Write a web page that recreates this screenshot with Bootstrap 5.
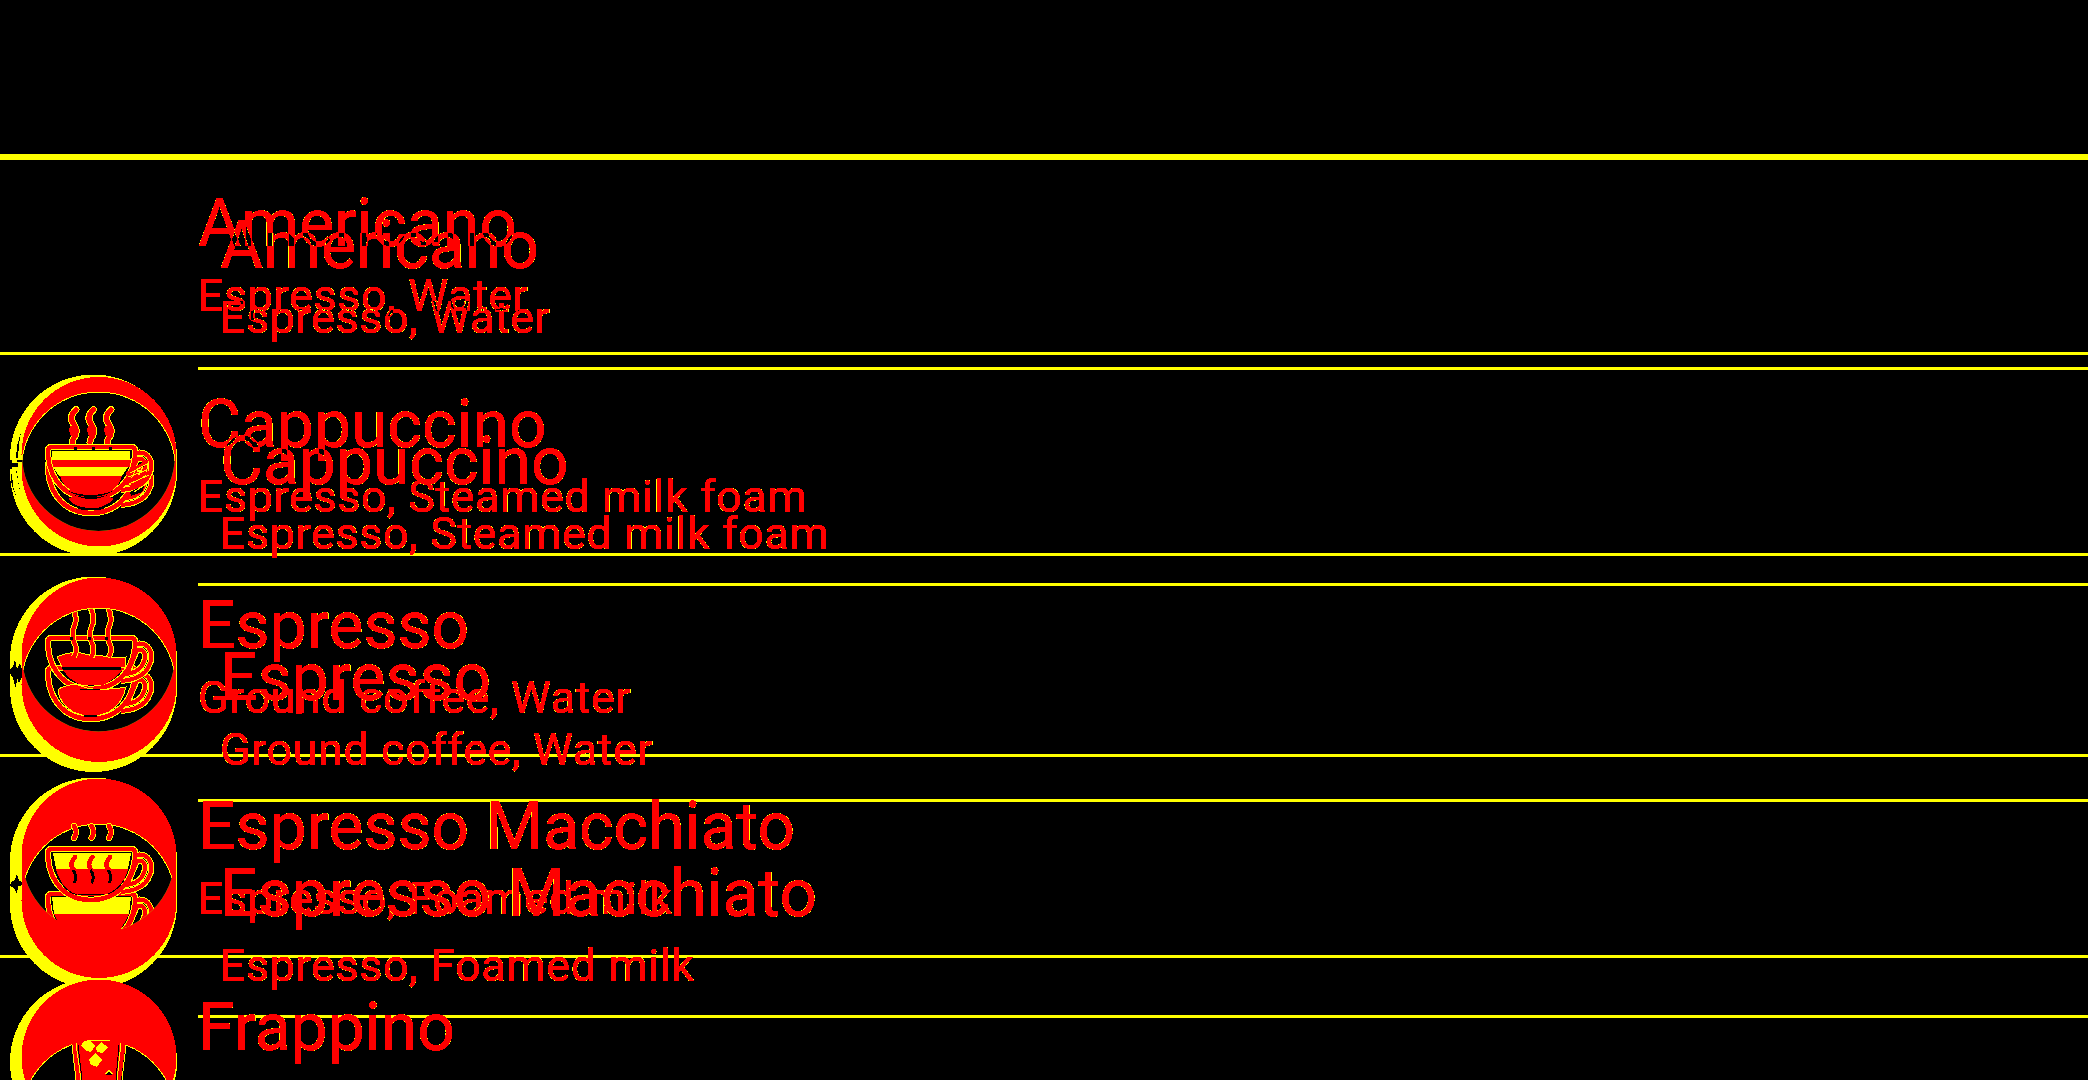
<!DOCTYPE html>
<html lang="en">
<head>
<meta charset="utf-8">
<meta name="viewport" content="width=device-width, initial-scale=1">
<title>Coffee list</title>
<link href="https://cdn.jsdelivr.net/npm/bootstrap@5.3.0/dist/css/bootstrap.min.css" rel="stylesheet">
<style>
  body { background: #000; font-family: Roboto, sans-serif; height: 1080px; }
  .appbar { height: 160px; border-bottom: 6px solid #ff0; }
  /* every child of a stack shares one cell, so the lists lie over each other */
  .stack { display: grid; grid-template: 920px / 100%; overflow: hidden; }
  .stack > * { grid-area: 1 / 1; min-width: 0; min-height: 0; }
  .words { background: #000; isolation: isolate; filter: url(#edges); }
  .words > :last-child { mix-blend-mode: difference; }
  .wide > li { height: 201px; flex: none; }
  .tall > li { height: 216px; flex: none; }
  .ruled.wide > li:first-child { height: 195px; }
  .ruled.tall > li:first-child { height: 210px; }
  .ruled > li { border-bottom: 3px solid #ff0; }
  .wide.names, .wide.parts { padding-left: 198px; }
  .tall.names, .tall.parts { padding-left: 220px; }
  .names, .parts { color: #f00; white-space: nowrap; }
  .names { font-size: 66px; line-height: 78px; }
  .parts { font-size: 45px; line-height: 54px; letter-spacing: .53px; }
  .wide.names { padding-top: 25px; }
  .tall.names { padding-top: 47px; }
  .wide.parts { padding-top: 109px; }
  .tall.parts { padding-top: 131px; }
  .inset { margin-left: 198px; }
  .art { shape-rendering: crispEdges; }
</style>
<script src="https://cdn.jsdelivr.net/npm/bootstrap@5.3.0/dist/js/bootstrap.bundle.min.js"></script>
</head>
<body class="overflow-hidden">
<svg width="0" height="0" class="position-absolute" aria-hidden="true">
  <filter id="edges" x="0" y="0" width="100%" height="100%" color-interpolation-filters="sRGB">
    <feColorMatrix in="SourceGraphic" values="0 0 0 0 1  0 0 0 0 1  0 0 0 0 0  1 0 0 0 0"/>
    <feComponentTransfer result="rim"><feFuncA type="discrete" tableValues="0 1 1 1 1 1 1 1 1 1 1 1 1 1 1 1 1 1 1 1 1 1 1 1 1"/></feComponentTransfer>
    <feColorMatrix in="SourceGraphic" values="0 0 0 0 1  0 0 0 0 0  0 0 0 0 0  1 0 0 0 0"/>
    <feComponentTransfer result="core"><feFuncA type="discrete" tableValues="0 0 0 0 1 1 1 1 1 1 1 1 1 1 1 1 1 1 1 1 1 1 1 1 1"/></feComponentTransfer>
    <feMerge><feMergeNode in="rim"/><feMergeNode in="core"/></feMerge>
  </filter>
</svg>
<header class="appbar"></header>
<main class="stack">
  <ul class="list-unstyled mb-0 d-flex flex-column wide ruled"><li></li><li></li><li></li><li></li></ul>
  <ul class="list-unstyled mb-0 d-flex flex-column tall ruled inset"><li></li><li></li><li></li><li></li></ul>
  <svg class="art" width="198" height="920" viewBox="0 160 198 920" fill="none">
    <defs>
      <path id="cup" d="M48 10V6Q48 2 52 2H131Q135 2 135 6V12C132 36 116 53 91 53C66 53 50 36 48 10Z"/>
      <path id="ear" d="M135 8C149 5 156 18 148 32C142 42 131 44 121 45M137 14C145 12 148 21 141 31C137 36 132 37 127 38Z"/>
      <g id="mug"><use href="#cup" stroke="#ff0" stroke-width="6.5"/><use href="#ear" stroke="#ff0" stroke-width="6"/><use href="#ear" stroke="#f00" stroke-width="4"/><use href="#cup" stroke="#f00" stroke-width="4.5"/></g>
      <path id="wisp" d="M76 0Q68 8 74 15Q79 22 73 30Q71 36 76 44" stroke-linecap="round"/>
      <g id="steam"><g stroke="#ff0" stroke-width="7"><use href="#wisp"/><use href="#wisp" x="17.500"/><use href="#wisp" x="35"/></g><g stroke="#f00" stroke-width="5"><use href="#wisp"/><use href="#wisp" x="17.500"/><use href="#wisp" x="35"/></g></g>
      <clipPath id="l1"><circle cx="98.500" cy="454.500" r="76.500"/></clipPath>
      <clipPath id="l2"><circle cx="98.500" cy="655" r="76.500"/></clipPath>
      <clipPath id="l3"><circle cx="98.500" cy="856" r="76.500"/></clipPath>
      <clipPath id="l4"><circle cx="98.500" cy="1057" r="76.500"/></clipPath>
      <clipPath id="e2"><circle cx="98.500" cy="685" r="76.500"/></clipPath>
    </defs>
    <!-- discs -->
    <g fill="#ff0">
      <circle cx="93.500" cy="458" r="83.500"/><circle cx="93.500" cy="472.500" r="83.500"/>
      <circle cx="93.500" cy="660" r="83.500"/><circle cx="93.500" cy="688.500" r="83.500"/><path d="M10 660h167v29H10z"/>
      <circle cx="93.500" cy="861" r="83.500"/><circle cx="93.500" cy="904.500" r="83.500"/><path d="M10 861h167v44H10z"/>
      <circle cx="93.500" cy="1062" r="83.500"/>
    </g>
    <path fill="#000" d="M10 460h2v9h-2zM17 460h5v2h-5zM10 463h8v4h-8zM21 432l-4 14-1 12h2l1-14zM11 474h1l1 12 4 12-4-9-2-8zM17 470l1 12 4 18-3-15-3-14zM15 659l2 10 3-6 2 6v8l-3 6-2-5-1 11-3-11-3-5v-4l3-2zM11 882l4-2 2-6 2 7 4 1v3l-5 1-1 8-3-6-4-2z"/>
    <g fill="#f00">
      <circle cx="99" cy="454.500" r="77.500"/><circle cx="99" cy="469" r="77.500"/>
      <circle cx="99" cy="655" r="77.500"/><circle cx="99" cy="684.500" r="77.500"/><path d="M22 655h154v30H22z"/>
      <circle cx="99" cy="856" r="77.500"/><circle cx="99" cy="900.500" r="77.500"/><path d="M22 856h154v45H22z"/>
      <circle cx="99" cy="1057" r="77.500"/>
    </g>
    <g fill="#ff0">
      <g clip-path="url(#l1)"><circle cx="98.500" cy="469" r="77.500"/></g>
      <g clip-path="url(#l2)"><circle cx="98.500" cy="685" r="77.500"/></g>
      <g clip-path="url(#l3)"><circle cx="98.500" cy="901" r="77.500"/></g>
      <g clip-path="url(#l4)"><circle cx="98.500" cy="1117" r="77.500"/></g>
    </g>
    <g fill="#000">
      <g clip-path="url(#l1)"><circle cx="98.500" cy="469" r="76.500"/></g>
      <g clip-path="url(#l2)"><circle cx="98.500" cy="685" r="76.500"/></g>
      <g clip-path="url(#l3)"><circle cx="98.500" cy="901" r="76.500"/></g>
      <g clip-path="url(#l4)"><circle cx="98.500" cy="1117" r="76.500"/></g>
    </g>
    <!-- cappuccino -->
    <use href="#steam" y="409.500"/>
    <use href="#mug" y="460"/>
    <path fill="#000" d="M51 449h80v10H51zM57 465h68v4H57z"/>
    <path fill="#ff0" d="M52 451h78v9H52zM53 467h75l-6 9H59z"/>
    <path fill="#f00" d="M50 460h82l-1 7H52zM60 476h62q-5 16-15 17H74q-10-5-14-17z"/>
    <use href="#mug" y="445"/>
    <path fill="#f00" d="M62 476h58q-3 13-14 19l8 4q-11 10-23 9-15 0-23-9l8-4q-10-6-14-19z"/>
    <path fill="#000" d="M68 491q23 8 45 0-22 12-45 0zM74 495q17 5 34 0-17 8-34 0zM78 508q13 3 26 0v1q-13 3-26 0z"/>
    <path fill="#000" d="M74 447h3v3h-3zM92 447h3v3h-3zM109 447h3v3h-3zM130 492l15-7-3 7-11 4zM141 462h3v5h-3z"/>
    <path stroke="#f00" stroke-width="3" d="M130 480l20-8M130 487l18-11M126 474l22-13"/>
    <path stroke="#ff0" stroke-width="1" d="M128 477l19-7M129 484l20-9M130 473l17-9M134 492l12-8"/>
    <path fill="#f00" d="M70 426l5-1 3 6-2 6-5-1-2-5zM88 426l5-1 3 6-2 6-5-1-2-5zM105 426l5-1 3 6-2 6-5-1-2-5z"/>
    <!-- espresso -->
    <use href="#mug" y="666"/>
    <use href="#mug" y="636"/>
    <path fill="#f00" stroke="#ff0" d="M57 657q8-4 20-5 14 4 26 4 12 3 23 1l-1 10H62zM58 690q3-4 18-6 14 7 33 5 7 0 17-2-3 16-17 25-18 8-36 0-14-9-15-22z"/>
    <path fill="#f00" d="M63 670h59q-9 11-19 15H82q-12-4-19-15z"/>
    <path fill="#000" d="M62 667h59v3H63zM80 689h20v1H80zM84 715h13v2H84z"/>
    <g clip-path="url(#e2)"><g stroke="#ff0" stroke-width="6"><path id="w2" d="M73 607Q78 619 74 627Q71 634 74 642Q78 650 74 657"/><use href="#w2" x="17.500"/><use href="#w2" x="35"/></g><g stroke="#f00" stroke-width="4"><use href="#w2"/><use href="#w2" x="17.500"/><use href="#w2" x="35"/></g></g>
    <path fill="#000" d="M70 637h3v3h-3zM88 637h3v3h-3zM105 637h3v3h-3z"/>
    <!-- macchiato -->
    <g clip-path="url(#l3)"><use href="#mug" y="892"/></g>
    <path fill="#000" d="M51 896h80v9H51z"/>
    <path fill="#ff0" d="M52 897h79l-2 17H54z"/>
    <path fill="#f00" d="M54 914h75l-10 19H64z"/>
    <path fill="#000" d="M52 852h79v10H52z"/>
    <path fill="#ff0" d="M53 853h78l-3 16H56z"/>
    <path fill="#f00" d="M56 869h72q-6 22-20 26H76q-15-7-20-26z"/>
    <use href="#mug" y="847"/>
    <path stroke="#000" d="M57 877q9 15 20 18M78 894h26M108 894q10-4 16-14"/>
    <g stroke="#ff0" stroke-width="6" stroke-linecap="round"><path id="w3" d="M74 826Q78 832 74 838"/><use href="#w3" x="17.500"/><use href="#w3" x="35"/></g>
    <g stroke="#f00" stroke-width="4.500" stroke-linecap="round"><use href="#w3"/><use href="#w3" x="17.500"/><use href="#w3" x="35"/><path id="w4" d="M75 857Q68 865 75 871"/><use href="#w4" x="17.500"/><use href="#w4" x="35"/></g>
    <g stroke="#000" stroke-width="3"><path id="w5" d="M73 870Q78 877 74 883"/><use href="#w5" x="17.500"/><use href="#w5" x="35"/></g>
    <!-- frappino -->
    <path fill="#f00" d="M72 1041h54l-5 39H76z"/>
    <path stroke="#ff0" d="M72 1045l4 35M76 1043l5 37M126 1045l-4 35M121 1043l-4 37"/>
    <path stroke="#000" d="M78 1045l4 35M119 1045l-3 35"/>
    <path fill="#ff0" d="M84 1041l6-1 5 6-4 6-5-1-5-5zM96 1047l5-5 7 5-5 6-6-1zM89 1059l6-6 7 7-5 7-6-2zM92 1040h12v1H92zM104 1074l5-4 5 4z"/>
    <path fill="#000" d="M105 1075l4-3 4 3z"/>
  </svg>
  <section class="stack words">
    <ul class="list-unstyled mb-0 d-flex flex-column wide parts"><li>Espresso, Water</li><li>Espresso, Steamed milk foam</li><li>Ground coffee, Water</li><li>Espresso, Foamed milk</li></ul>
    <ul class="list-unstyled mb-0 d-flex flex-column tall parts"><li>Espresso, Water</li><li>Espresso, Steamed milk foam</li><li>Ground coffee, Water</li><li>Espresso, Foamed milk</li></ul>
  </section>
  <section class="stack words">
    <ul class="list-unstyled mb-0 d-flex flex-column wide names"><li>Americano</li><li>Cappuccino</li><li>Espresso</li><li>Espresso Macchiato</li><li>Frappino</li></ul>
    <ul class="list-unstyled mb-0 d-flex flex-column tall names"><li>Americano</li><li>Cappuccino</li><li>Espresso</li><li>Espresso Macchiato</li></ul>
  </section>
</main>
</body>
</html>
